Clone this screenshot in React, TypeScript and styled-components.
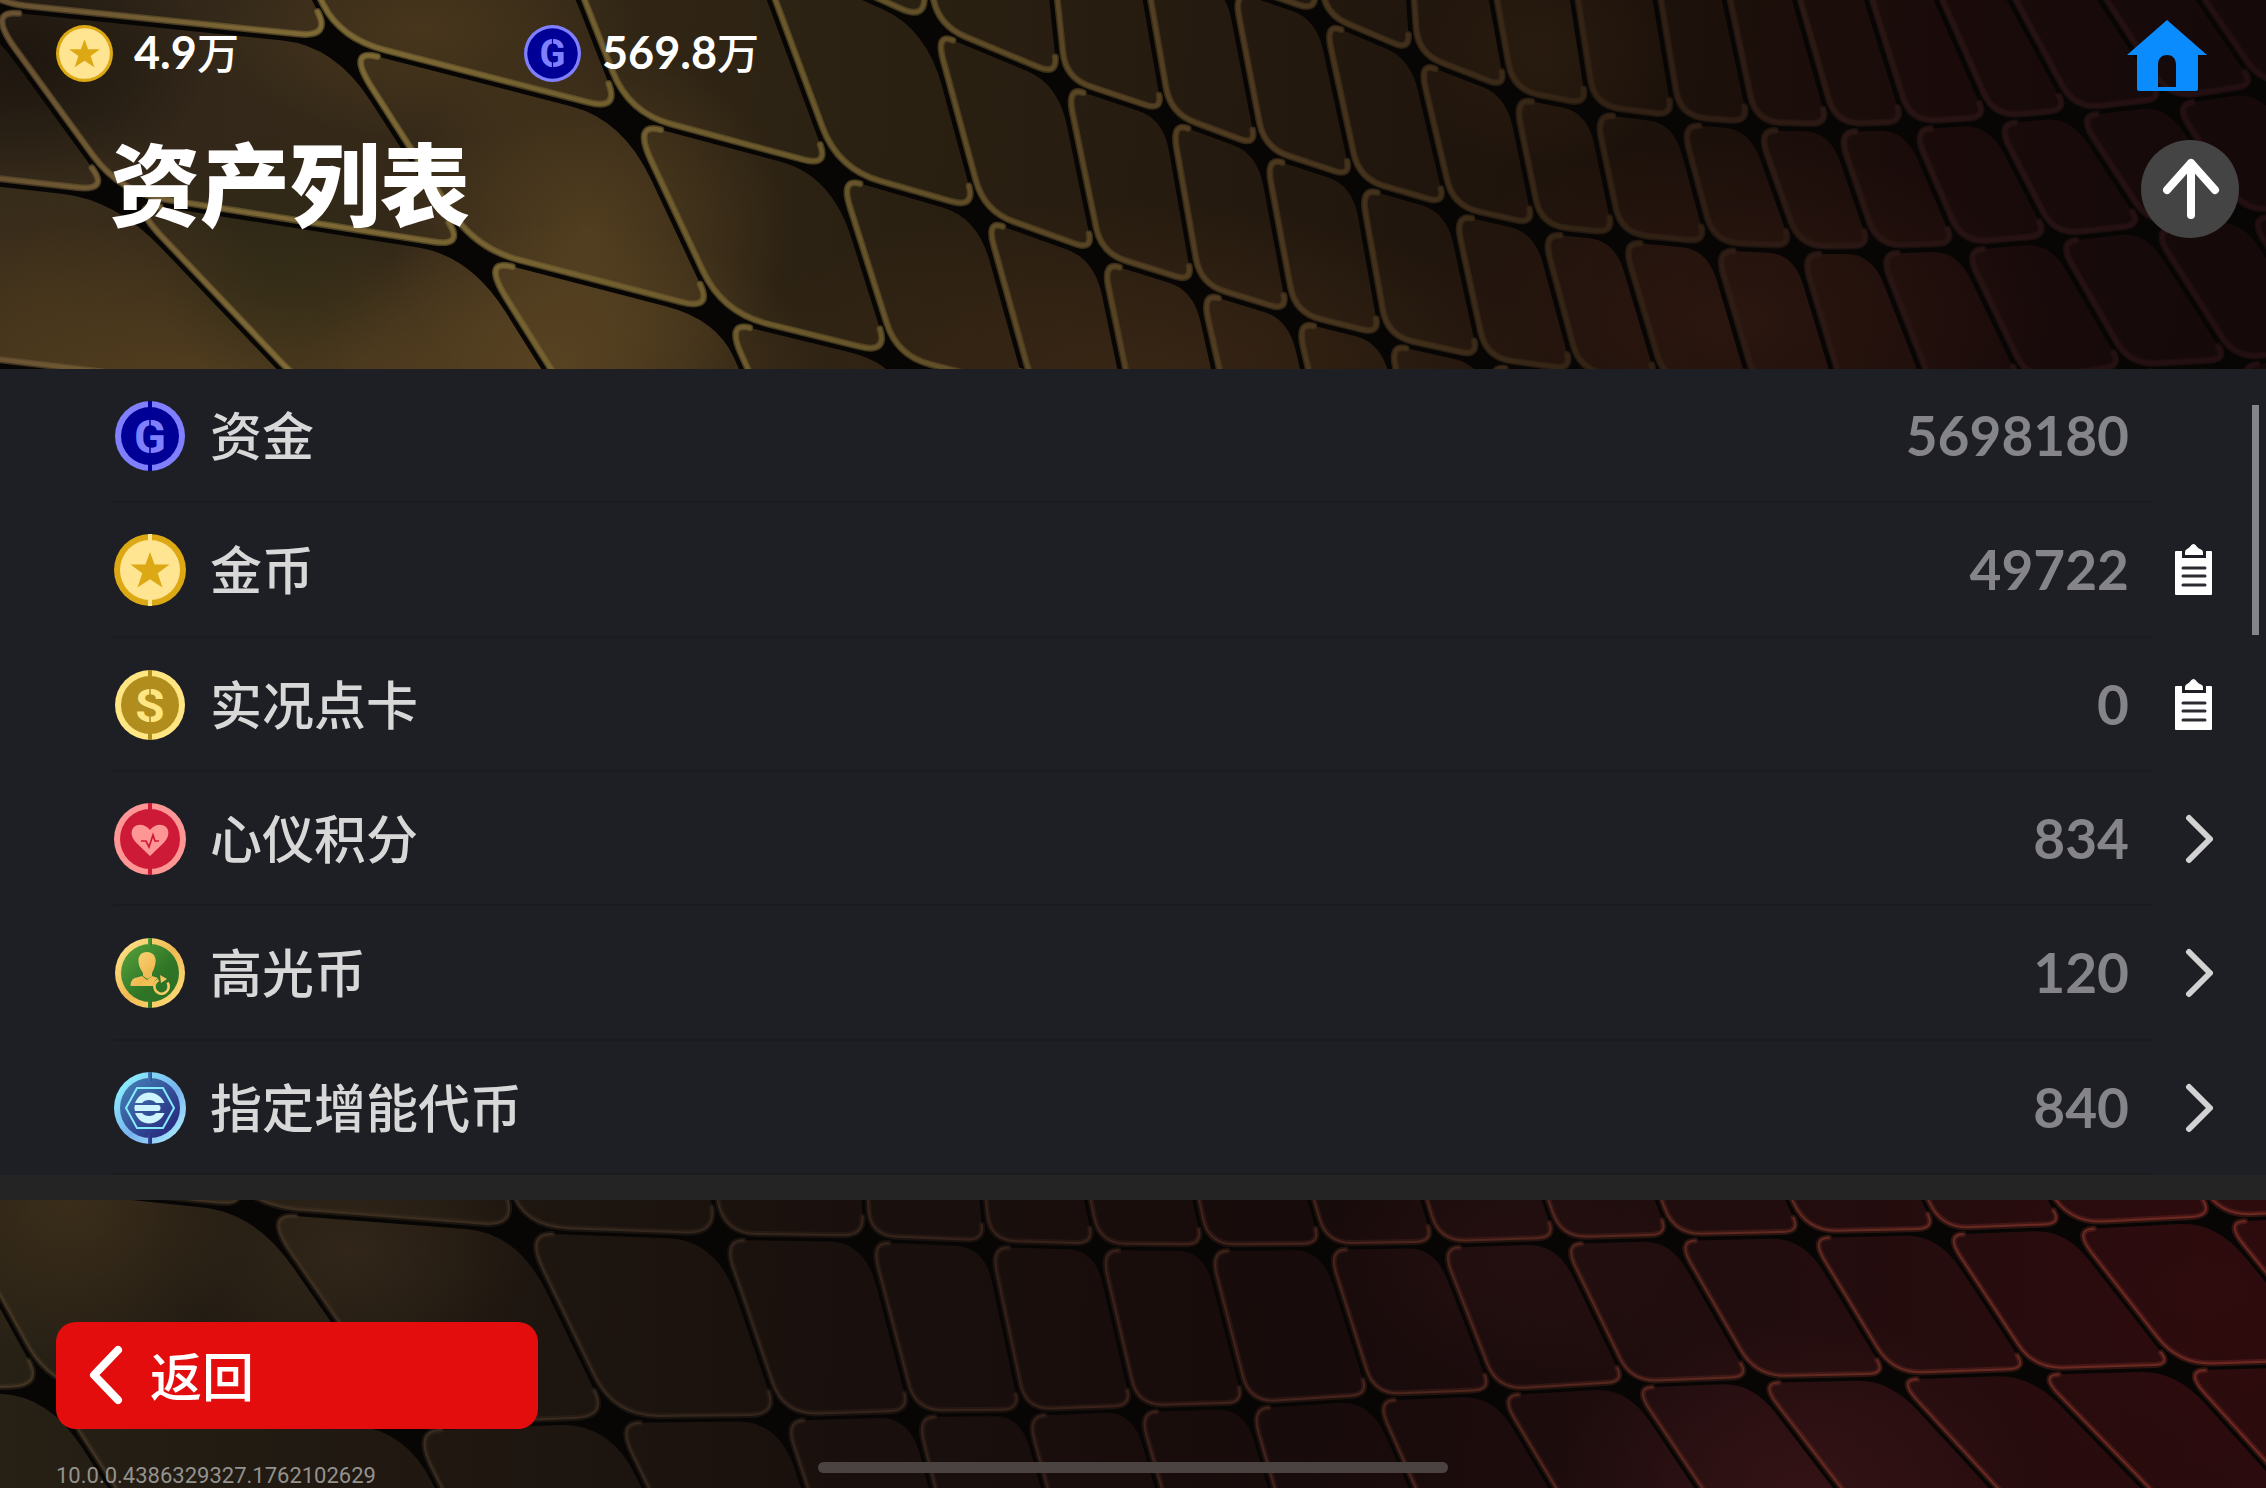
import React from "react";
import styled, { createGlobalStyle } from "styled-components";

const latin = `Lato, "Noto Sans CJK SC", sans-serif`;
const cjk = `"Noto Sans CJK SC", sans-serif`;

const GlobalStyle = createGlobalStyle`
  *, *::before, *::after { box-sizing: border-box; }
  body { margin: 0; background: #070605; font-family: ${cjk}; }
  button { font: inherit; color: inherit; border: 0; padding: 0; background: none; cursor: pointer; }
`;

/* ---------- scale-shaped backdrop ---------- */

type Pt = [number, number];
type Mesh = (Pt | null)[][];

// One entry per column, nodes listed from top to bottom.
const upperMesh: Mesh = [
  [null, null, [-640, -60], [-500, -40], [-300, 150], [-190, 342]],
  [null, null, [-90, -110], [-22, 6], [117, 197], [312, 402]],
  [null, null, [290, -50], [337, 43], [472, 253], [572, 412]],
  [null, null, [558, -54], [625, 117], [719, 317], [765, 420]],
  [null, [720, -180], [750, -54], [834, 173], [893, 360], [915, 430]],
  [null, [920, -150], [929, 27], [980, 215], [1030, 395], null],
  [null, [1046, -60], [1061, 82], [1097, 257], [1132, 425], null],
  [null, [1138, -44], [1166, 117], [1196, 288], [1230, 440], null],
  [[1210, -120], [1228, -14], [1260, 152], [1291, 317], [1322, 450], null],
  [[1312, -110], [1319, 17], [1355, 183], [1383, 340], [1415, 460], null],
  [[1405, -60], [1413, 57], [1449, 210], [1482, 362], [1512, 470], null],
  [[1482, -54], [1509, 94], [1537, 230], [1576, 375], [1606, 480], null],
  [[1562, -70], [1590, 110], [1617, 238], [1661, 385], [1700, 490], null],
  [[1644, -70], [1676, 121], [1710, 247], [1753, 392], [1790, 490], null],
  [[1710, -70], [1752, 127], [1796, 251], [1840, 396], [1880, 490], null],
  [[1775, -70], [1832, 129], [1874, 251], [1930, 394], [1970, 490], null],
  [[1845, -70], [1907, 127], [1959, 248], [2025, 385], [2070, 490], null],
  [[1906, -70], [1991, 122], [2052, 240], [2127, 370], [2180, 480], null],
  [[1972, -70], [2072, 114], [2147, 229], [2233, 364], [2290, 470], null],
  [[2055, -70], [2168, 103], [2243, 217], [2330, 352], [2400, 460], null],
  [[2151, -70], [2260, 89], [2345, 205], [2450, 345], null, null],
  [[2260, -70], [2360, 76], [2460, 195], null, null, null],
];

const lowerMesh: Mesh = [
  [[-380, 1100], [-330, 1140], [-240, 1398], [-160, 1560]],
  [[-120, 1110], [-70, 1176], [48, 1389], [158, 1560]],
  [[205, 1150], [257, 1210], [408, 1428], [474, 1560]],
  [[490, 1130], [520, 1230], [612, 1420], [680, 1560]],
  [[705, 1130], [719, 1237], [781, 1418], [828, 1560]],
  [[860, 1130], [867, 1239], [913, 1414], [950, 1560]],
  [[975, 1130], [987, 1244], [1023, 1413], [1064, 1560]],
  [[1072, 1130], [1097, 1247], [1135, 1409], [1179, 1560]],
  [[1180, 1130], [1206, 1248], [1247, 1406], [1292, 1560]],
  [[1290, 1130], [1324, 1247], [1372, 1398], [1444, 1560]],
  [[1402, 1130], [1437, 1245], [1495, 1393], [1595, 1560]],
  [[1520, 1130], [1559, 1241], [1629, 1385], [1746, 1560]],
  [[1632, 1130], [1672, 1238], [1754, 1380], [1892, 1560]],
  [[1755, 1130], [1805, 1235], [1891, 1377], [2059, 1560]],
  [[1890, 1130], [1940, 1232], [2032, 1372], [2214, 1560]],
  [[2010, 1130], [2067, 1227], [2177, 1368], [2350, 1560]],
  [[2165, 1130], [2218, 1219], [2335, 1363], [2500, 1560]],
  [[2300, 1130], [2370, 1213], [2490, 1360], [2650, 1560]],
];

const mix = (a: Pt, b: Pt, t: number): Pt => [a[0] + (b[0] - a[0]) * t, a[1] + (b[1] - a[1]) * t];
const dist = (a: Pt, b: Pt) => Math.hypot(b[0] - a[0], b[1] - a[1]);
const fmt = (p: Pt) => `${p[0].toFixed(1)} ${p[1].toFixed(1)}`;

// Moves every edge of a clockwise quad inwards by its own amount.
function inset(q: Pt[], by: number[]): Pt[] {
  const lines = q.map((p, i) => {
    const n = q[(i + 1) % 4];
    const len = dist(p, n) || 1;
    const dx = (n[0] - p[0]) / len;
    const dy = (n[1] - p[1]) / len;
    return { x: p[0] - dy * by[i], y: p[1] + dx * by[i], dx, dy };
  });
  return q.map((_, i) => {
    const a = lines[(i + 3) % 4];
    const b = lines[i];
    const det = a.dx * b.dy - a.dy * b.dx;
    const t = ((b.x - a.x) * b.dy - (b.y - a.y) * b.dx) / det;
    return [a.x + a.dx * t, a.y + a.dy * t] as Pt;
  });
}

function tiles(mesh: Mesh, rim: number) {
  const out: { body: string; edge: string }[] = [];
  for (let c = 0; c + 1 < mesh.length; c++) {
    for (let r = 0; r + 1 < mesh[c].length; r++) {
      const corners = [mesh[c][r], mesh[c + 1][r], mesh[c + 1][r + 1], mesh[c][r + 1]];
      if (corners.some((p) => !p)) continue;
      const [tl, tr, br, bl] = inset(corners as Pt[], [3, 3, 2 + rim / 2, 2 + rim / 2]);
      const cut = (from: Pt, to: Pt, px: number) => mix(from, to, Math.min(0.4, px / dist(from, to)));
      const width = dist(tl, tr);
      const wide = Math.max(32, Math.min(66, width * 0.32));
      const sweep = Math.max(26, Math.min(46, width * 0.24));
      const tight = Math.max(17, Math.min(32, width * 0.14));
      const edge = `M${fmt(cut(tl, tr, tight))} Q${fmt(tl)} ${fmt(cut(tl, bl, tight * 1.5))} L${fmt(cut(bl, tl, sweep))} Q${fmt(bl)} ${fmt(cut(bl, br, sweep))} L${fmt(cut(br, bl, tight))} Q${fmt(br)} ${fmt(cut(br, tr, tight * 0.9))}`;
      const body = `${edge} L${fmt(cut(tr, br, wide))} Q${fmt(tr)} ${fmt(cut(tr, tl, wide * 0.8))} Z`;
      out.push({ body, edge });
    }
  }
  return out;
}

const upperTiles = tiles(upperMesh, 6);
const lowerTiles = tiles(lowerMesh, 3);

const stops = (list: [number, string][]) =>
  list.map(([at, color]) => <stop key={at} offset={at} stopColor={color} />);

const glows: [number, number, number, number, string, number][] = [
  [420, 30, 220, 110, "#5a4320", 0.5],
  [590, 230, 200, 190, "#6a5027", 0.55],
  [170, 390, 420, 170, "#664c23", 0.65],
  [560, 370, 260, 150, "#6a5027", 0.6],
  [40, 300, 220, 200, "#4e3b1b", 0.45],
  [20, 60, 190, 130, "#16100a", 0.7],
  [280, 260, 130, 130, "#2c2a14", 0.6],
  [1130, 380, 420, 180, "#452d18", 0.6],
  [1540, 50, 140, 120, "#2e1f10", 0.6],
  [1730, 320, 320, 180, "#2f1710", 0.8],
  [70, 1200, 180, 170, "#46351d", 0.65],
  [350, 1250, 180, 130, "#3c2f1e", 0.6],
  [1520, 1260, 200, 120, "#2c1213", 0.5],
  [1800, 1488, 240, 170, "#3a1518", 0.7],
  [2200, 1290, 260, 200, "#300b0e", 0.6],
];

function ScaleBackdrop() {
  return (
    <BackdropSvg viewBox="0 0 2266 1488" preserveAspectRatio="xMidYMid slice" aria-hidden="true">
      <defs>
        <linearGradient id="upperFill" gradientUnits="userSpaceOnUse" x1="0" y1="0" x2="2266" y2="120">
          {stops([[0, "#30261a"], [0.2, "#352918"], [0.38, "#2b2112"], [0.58, "#23180e"], [0.72, "#1d120b"], [0.86, "#1a0b0a"], [1, "#15090a"]])}
        </linearGradient>
        <linearGradient id="lowerFill" gradientUnits="userSpaceOnUse" x1="0" y1="1200" x2="2266" y2="1260">
          {stops([[0, "#262015"], [0.2, "#1f1710"], [0.38, "#19100d"], [0.58, "#180b0b"], [0.76, "#210d0e"], [1, "#2b0b0d"]])}
        </linearGradient>
        <linearGradient id="upperRim" gradientUnits="userSpaceOnUse" x1="0" y1="0" x2="2266" y2="0">
          {stops([[0, "#6b5433"], [0.13, "#826d37"], [0.35, "#6d5b2d"], [0.55, "#4f3b20"], [0.7, "#342415"], [0.85, "#281413"], [1, "#240f12"]])}
        </linearGradient>
        <linearGradient id="lowerRim" gradientUnits="userSpaceOnUse" x1="0" y1="0" x2="2266" y2="0">
          {stops([[0, "#4a3a26"], [0.3, "#3a2b20"], [0.45, "#3c241c"], [0.65, "#58291f"], [0.82, "#702e24"], [1, "#7c2c24"]])}
        </linearGradient>
        {glows.map(([, , , , color, alpha], i) => (
          <radialGradient key={i} id={`glow${i}`}>
            <stop offset="0" stopColor={color} stopOpacity={alpha} />
            <stop offset="0.5" stopColor={color} stopOpacity={alpha * 0.55} />
            <stop offset="1" stopColor={color} stopOpacity="0" />
          </radialGradient>
        ))}
        <clipPath id="tileShapes">
          {[...upperTiles, ...lowerTiles].map((t, i) => <path key={i} d={t.body} />)}
        </clipPath>
      </defs>
      <rect width="2266" height="1488" fill="#070605" />
      <g clipPath="url(#tileShapes)">
        <rect y="0" width="2266" height="700" fill="url(#upperFill)" />
        <rect y="700" width="2266" height="788" fill="url(#lowerFill)" />
        {glows.map(([x, y, rx, ry], i) => (
          <ellipse key={i} cx={x} cy={y} rx={rx} ry={ry} fill={`url(#glow${i})`} />
        ))}
      </g>
      <g fill="none" stroke="url(#upperRim)" strokeLinecap="round">
        {upperTiles.map((t, i) => (
          <React.Fragment key={i}>
            <path d={t.edge} strokeWidth="7" strokeOpacity="0.6" />
            <path d={t.edge} strokeWidth="4" strokeOpacity="0.9" />
          </React.Fragment>
        ))}
      </g>
      <g fill="none" stroke="url(#lowerRim)" strokeLinecap="round">
        {lowerTiles.map((t, i) => (
          <React.Fragment key={i}>
            <path d={t.edge} strokeWidth="6" strokeOpacity="0.35" />
            <path d={t.edge} strokeWidth="2" strokeOpacity="0.8" />
          </React.Fragment>
        ))}
      </g>
    </BackdropSvg>
  );
}

/* ---------- coins and icons ---------- */

type CoinKind = "gp" | "gold" | "points" | "heart" | "highlight" | "booster";

const coinColors: Record<CoinKind, { ring: string; face: string; radius: number }> = {
  gp: { ring: "#8080ff", face: "#000096", radius: 35 },
  gold: { ring: "#dca814", face: "#ffe591", radius: 36 },
  points: { ring: "#ffe682", face: "#b08d1c", radius: 35 },
  heart: { ring: "#ff9696", face: "#cd1a36", radius: 36 },
  highlight: { ring: "url(#hlRing)", face: "url(#hlFace)", radius: 35 },
  booster: { ring: "url(#boRing)", face: "url(#boFace)", radius: 36 },
};

function CoinEmblem({ kind }: { kind: CoinKind }) {
  const { ring, face } = coinColors[kind];
  if (kind === "gp" || kind === "points")
    return (
      <>
        <CoinLetter y="17" textAnchor="middle" fill={ring}>{kind === "gp" ? "G" : "S"}</CoinLetter>
        <path d="M0 -19V-9M0 9V19" stroke={face} strokeWidth="1.5" />
      </>
    );
  if (kind === "gold")
    return <path fill={ring} d="M0 -18L4.600 -5.500H19.500L7.700 3.200L12.500 17.500L0 9.200L-12.500 17.500L-7.700 3.200L-19.500 -5.500H-4.600Z" />;
  if (kind === "heart")
    return (
      <>
        <path fill={ring} d="M0 17L-14 3.500C-20 -3 -19 -9 -16 -12C-11 -16 -4 -14 0 -9C4 -14 11 -16 16 -12C19 -9 20 -3 14 3.500Z" />
        <path d="M-9 2H-4L-1 8L3 -4L5 2H9" fill="none" stroke={face} strokeWidth="1.700" />
      </>
    );
  if (kind === "highlight")
    return (
      <>
        <g fill="url(#hlRing)">
          <path d="M-3 -21C3.500 -21 6.500 -16 5.500 -10C4.500 -5 3 -2 2 0V3L-2.500 6L-7 3V0C-9 -3 -11 -6 -11.500 -11C-12 -17 -9 -21 -3 -21Z" />
          <path d="M-8 3L-3 7L2 3L8 5C4 8 3 11 4 13H-19.500C-19.500 8 -17 5 -13 4.500Z" />
        </g>
        <path d="M8.500 7A7.200 7.200 0 1 0 17.500 9.500" fill="none" stroke="url(#hlRing)" strokeWidth="2.600" />
        <path d="M10 2L17 6L11 10Z" fill="url(#hlRing)" />
      </>
    );
  return (
    <>
      <path d="M-24 0L-13 -20H13L24 0L13 20H-13Z" fill="none" stroke="#84ecff" strokeWidth="2" />
      <g fill="#cdf4ff">
        <path d="M-15 -5C-12 -12 -7 -15.500 -1 -15.500C6 -15.500 12 -11 14.500 -5H6C3 -9 -5 -9 -8 -5Z" />
        <path d="M-15 -3H8Q10.500 -3 10.500 0T8 3H-15Q-16.500 0 -15 -3Z" />
        <path d="M-15 5C-12 12 -7 15.500 -1 15.500C6 15.500 12 11 14.500 5H6C3 9 -5 9 -8 5Z" />
      </g>
    </>
  );
}

function Coin({ kind, size = 74, plain }: { kind: CoinKind; size?: number; plain?: boolean }) {
  const { ring, face, radius } = coinColors[kind];
  const half = plain ? radius : 37;
  return (
    <IconSvg width={size} height={size} viewBox={`${-half} ${-half} ${half * 2} ${half * 2}`} aria-hidden="true">
      <defs>
        {kind === "highlight" && (
          <>
            <linearGradient id="hlRing" gradientUnits="userSpaceOnUse" x1="-30" y1="-30" x2="30" y2="30">
              {stops([[0, "#ffe48a"], [0.5, "#f0ba52"], [1, "#ffdc78"]])}
            </linearGradient>
            <linearGradient id="hlFace" x1="0" y1="0" x2="1" y2="1">
              {stops([[0, "#58a33c"], [0.6, "#2f7526"], [1, "#2c6e26"]])}
            </linearGradient>
          </>
        )}
        {kind === "booster" && (
          <>
            <linearGradient id="boRing" x1="0" y1="0" x2="1" y2="1">
              {stops([[0.1, "#8cf2ff"], [0.55, "#78b2ee"], [0.9, "#a8eaff"]])}
            </linearGradient>
            <linearGradient id="boFace" x1="0" y1="0" x2="1" y2="1">
              {stops([[0.1, "#427cb4"], [0.8, "#2a3184"]])}
            </linearGradient>
          </>
        )}
      </defs>
      <circle r={radius} fill={ring} />
      <circle r={radius - (plain ? 4 : 6)} fill={face} />
      {!plain && <path d={`M-2 ${-radius}H2V-27H-2ZM-2 27H2V${radius}H-2Z`} fill={face} />}
      <CoinEmblem kind={kind} />
    </IconSvg>
  );
}

const ClipboardIcon = () => (
  <IconSvg width="38" height="52" viewBox="0 0 38 52" aria-hidden="true">
    <path fill="#fff" d="M1 7H7V14H31V7H36Q37 7 37 8V50Q37 51 36 51H1Q0 51 0 50V8Q0 7 1 7Z" />
    <path fill="#fff" d="M10 11V8Q10 6 12 5C15 4 16 0 18.500 0S22 4 25 5Q28 6 28 8V11Z" />
    <path stroke="#2b2c31" strokeWidth="3" strokeLinecap="round" d="M8 24H30M8 32H30M8 41H30" />
  </IconSvg>
);

const ChevronIcon = () => (
  <IconSvg width="38" height="52" viewBox="0 0 38 52" aria-hidden="true">
    <path d="M14 5L35 26L14 47" fill="none" stroke="#d2d2d2" strokeWidth="6" strokeLinecap="round" strokeLinejoin="round" />
  </IconSvg>
);

const HomeIcon = () => (
  <IconSvg width="80" height="72" viewBox="0 0 80 72" aria-hidden="true">
    <path
      fill="#0a8cff"
      fillRule="evenodd"
      d="M40 0L80 35H71V69Q71 71 69 71H12Q10 71 10 69V35H0ZM31 67H49V45C49 38 45 35 40 35S31 38 31 45Z"
    />
  </IconSvg>
);

const ArrowUpIcon = () => (
  <IconSvg width="60" height="64" viewBox="0 0 60 64" aria-hidden="true">
    <path d="M31 58V6M7 33L31 6L55 33" fill="none" stroke="#fff" strokeWidth="8" strokeLinecap="round" strokeLinejoin="round" />
  </IconSvg>
);

const BackIcon = () => (
  <IconSvg width="36" height="60" viewBox="0 0 36 60" aria-hidden="true">
    <path d="M30 5L6 30L30 55" fill="none" stroke="#fff" strokeWidth="8" strokeLinecap="round" strokeLinejoin="round" />
  </IconSvg>
);

/* ---------- layout ---------- */

const Page = styled.div`
  position: relative;
  isolation: isolate;
  display: flex;
  flex-direction: column;
  min-height: 100vh;
  overflow: hidden;
  color: #fff;
`;

const BackdropSvg = styled.svg`
  position: absolute;
  inset: 0;
  z-index: -1;
  width: 100%;
  height: 100%;
`;

const IconSvg = styled.svg`
  display: block;
  flex: none;
`;

const CoinLetter = styled.text`
  font: 700 47px Roboto, sans-serif;
`;

const Header = styled.header`
  display: flex;
  justify-content: space-between;
  height: 369px;
  padding: 20px 27px 0 56px;
`;

const Wallet = styled.div`
  display: grid;
  grid-template-columns: 444px auto;
  column-gap: 24px;
  height: 64px;
  align-items: center;
`;

const Balance = styled.div`
  display: flex;
  align-items: center;
  gap: 21px;
  font: 700 45px/64px ${latin};
`;

const Amount = styled.span`
  padding-bottom: 2px;
`;

const Unit = styled.span`
  font: 500 42px/60px ${cjk};
`;

const Title = styled.h1`
  margin: 30px 0 0 54px;
  font: 900 90px/132px ${cjk};
`;

const SideActions = styled.nav`
  display: flex;
  flex-direction: column;
  align-items: flex-end;
  gap: 48px;
`;

const HomeButton = styled.button`
  margin-right: 32px;
`;

const TopButton = styled.button`
  display: grid;
  place-items: center;
  width: 98px;
  height: 98px;
  border-radius: 50%;
  background: #444;
`;

const Panel = styled.main`
  position: relative;
  flex: 1;
  display: flex;
  background: #1e1f24;
  border-bottom: 25px solid #242424;
`;

const AssetList = styled.ul`
  flex: 1;
  display: grid;
  grid-auto-rows: 1fr;
  margin: 0;
  padding: 0 30px 0 113px;
  list-style: none;
`;

const AssetRow = styled.li`
  display: grid;
  grid-template-columns: 1fr 84px;
`;

const AssetBody = styled.div`
  display: flex;
  align-items: center;
  gap: 23px;
  padding-right: 23px;
  box-shadow: inset 0 -2px #1a1b1f;
`;

const AssetName = styled.span`
  flex: 1;
  padding-bottom: 4px;
  color: #d8d8d8;
  font: 500 52px/72px ${cjk};
`;

const AssetValue = styled.span`
  padding-bottom: 2px;
  color: #858488;
  font: 700 55px/72px ${latin};
`;

const RowAction = styled.button`
  display: grid;
  place-items: center;
`;

const ScrollThumb = styled.div`
  position: absolute;
  top: 36px;
  right: 7px;
  width: 7px;
  height: 230px;
  background: #858488;
`;

const Footer = styled.footer`
  position: relative;
  display: flex;
  flex-direction: column;
  align-items: flex-start;
  gap: 35px;
  padding: 122px 56px 0;
`;

const BackButton = styled.button`
  display: flex;
  align-items: center;
  gap: 26px;
  width: 482px;
  height: 107px;
  padding: 0 32px 2px;
  border-radius: 20px;
  background: #e40d0d;
  font: 500 52px/72px ${cjk};
`;

const Version = styled.small`
  color: #94928f;
  font: 400 22px/24px Roboto, sans-serif;
`;

const HomeIndicator = styled.div`
  position: absolute;
  bottom: 15px;
  left: 50%;
  width: 630px;
  height: 11px;
  margin-left: -315px;
  border-radius: 6px;
  background: #4a4342;
`;

type Asset = { kind: CoinKind; name: string; value: string; action?: "history" | "detail" };

const assets: Asset[] = [
  { kind: "gp", name: "资金", value: "5698180" },
  { kind: "gold", name: "金币", value: "49722", action: "history" },
  { kind: "points", name: "实况点卡", value: "0", action: "history" },
  { kind: "heart", name: "心仪积分", value: "834", action: "detail" },
  { kind: "highlight", name: "高光币", value: "120", action: "detail" },
  { kind: "booster", name: "指定增能代币", value: "840", action: "detail" },
];

export default function App() {
  return (
    <Page>
      <GlobalStyle />
      <ScaleBackdrop />
      <Header>
        <div>
          <Wallet>
            <Balance>
              <Coin kind="gold" size={57} plain />
              <Amount>4.9<Unit>万</Unit></Amount>
            </Balance>
            <Balance>
              <Coin kind="gp" size={57} plain />
              <Amount>569.8<Unit>万</Unit></Amount>
            </Balance>
          </Wallet>
          <Title>资产列表</Title>
        </div>
        <SideActions>
          <HomeButton type="button" aria-label="主页"><HomeIcon /></HomeButton>
          <TopButton type="button" aria-label="返回顶部"><ArrowUpIcon /></TopButton>
        </SideActions>
      </Header>
      <Panel>
        <AssetList>
          {assets.map((a) => (
            <AssetRow key={a.kind}>
              <AssetBody>
                <Coin kind={a.kind} />
                <AssetName>{a.name}</AssetName>
                <AssetValue>{a.value}</AssetValue>
              </AssetBody>
              {a.action && (
                <RowAction type="button" aria-label={a.name}>
                  {a.action === "history" ? <ClipboardIcon /> : <ChevronIcon />}
                </RowAction>
              )}
            </AssetRow>
          ))}
        </AssetList>
        <ScrollThumb />
      </Panel>
      <Footer>
        <BackButton type="button"><BackIcon />返回</BackButton>
        <Version>10.0.0.4386329327.1762102629</Version>
        <HomeIndicator />
      </Footer>
    </Page>
  );
}
